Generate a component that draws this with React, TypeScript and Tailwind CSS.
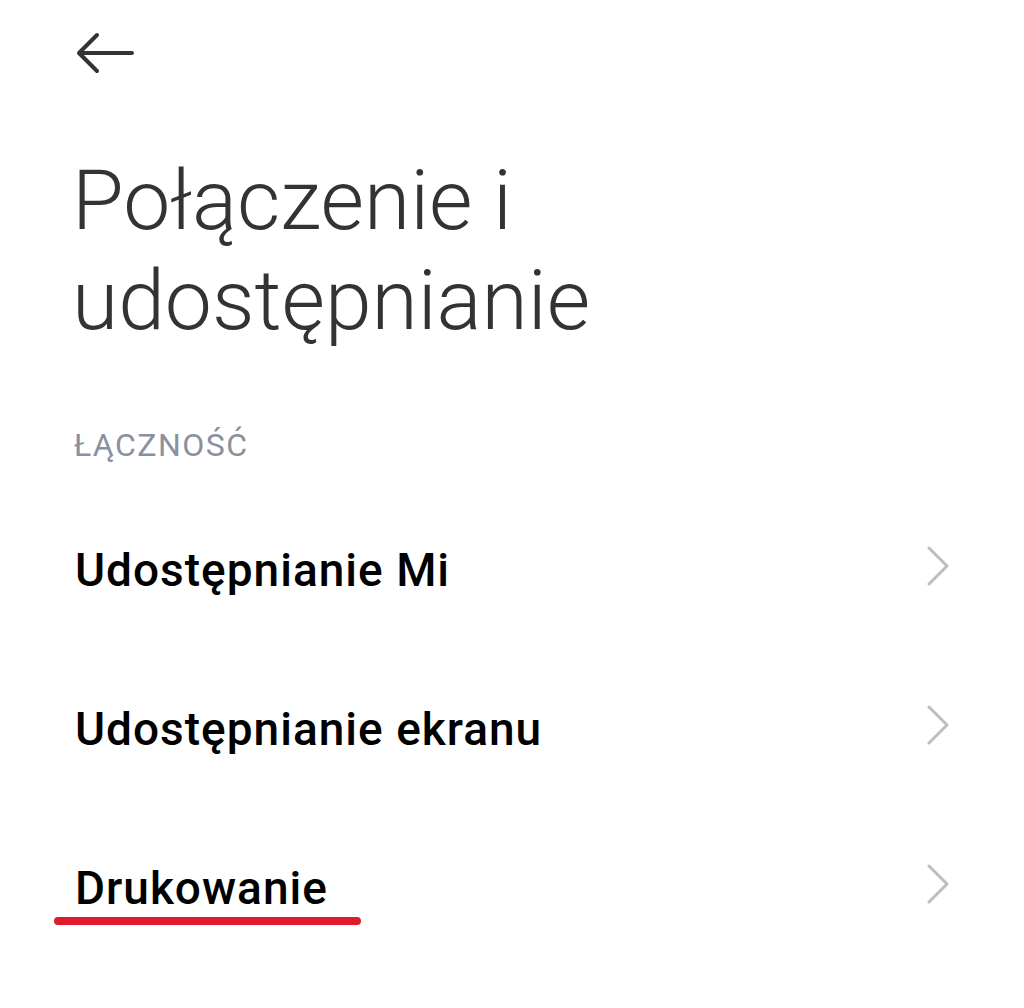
import React from "react";

const items = ["Udostępnianie Mi", "Udostępnianie ekranu", "Drukowanie"];

function Chevron() {
  return (
    <svg className="mb-[7px]" width="24" height="40" viewBox="0 0 24 40" fill="none">
      <path d="M3 2 L21 20 L3 38" stroke="#bdbdbd" strokeWidth="3" strokeLinecap="round" strokeLinejoin="round" />
    </svg>
  );
}

export default function App() {
  return (
    <div className="w-[1024px] h-[1008px] bg-white font-['Roboto',sans-serif] overflow-hidden">
      <div className="pt-[31px] pl-[76px]">
        <svg width="60" height="44" viewBox="0 0 60 44" fill="none">
          <path d="M4 22 H56 M21 4 L3 22 L21 40" stroke="#333333" strokeWidth="4" strokeLinecap="round" strokeLinejoin="round" />
        </svg>
      </div>
      <h1 className="mt-[76px] pl-[72px] text-[84px] leading-[100px] font-light text-[#333333]">
        Połączenie i
        <br />
        udostępnianie
      </h1>
      <div className="mt-[75px] pl-[74px] text-[32px] leading-[38px] tracking-[1.5px] text-[#8b90a0]">ŁĄCZNOŚĆ</div>
      <div className="mt-[26px]">
        {items.map((item, index) => (
          <div key={index} className="h-[159px] flex items-center justify-between pl-[75px] pr-[74px]">
            <span className="relative text-[46px] leading-[54px] font-medium tracking-[1px] text-black">
              {item}
              {index === 2 && (
                <span className="absolute left-[-21px] top-[56px] w-[307px] h-[8px] rounded-full bg-[#e01b2d]" />
              )}
            </span>
            <Chevron />
          </div>
        ))}
      </div>
    </div>
  );
}
